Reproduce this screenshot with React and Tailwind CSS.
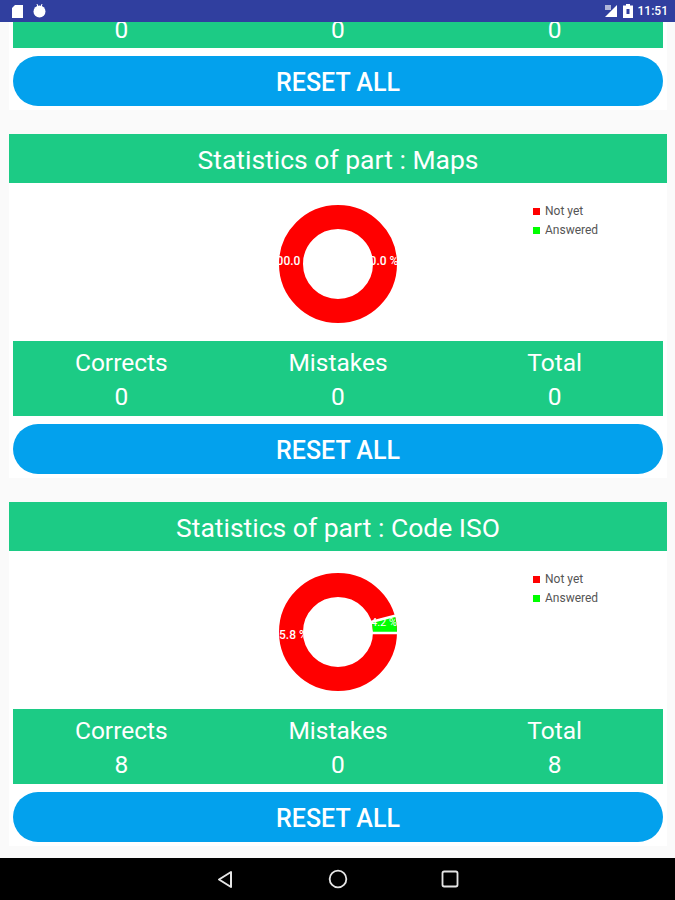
import { Square, Circle } from 'lucide-react';

const cards = [
  { part: 'Maps', corrects: 0, mistakes: 0, total: 0, answered: 0 },
  { part: 'Code ISO', corrects: 8, mistakes: 0, total: 8, answered: 4.2 },
];

function Donut({ answered }) {
  return (
    <svg width="130" height="130" viewBox="-65 -65 130 130" className="block">
      <circle r="47" fill="none" stroke="#ff0000" strokeWidth="24" />
      {answered > 0 ? (
        <>
          <path d="M 35 0 L 59 0 A 59 59 0 0 0 57 -15.5 L 34 -9.5 Z" fill="#00ff00" />
          <path d="M 33 -10 L 60 -17" stroke="#ffffff" strokeWidth="2.5" />
          <path d="M 33 1 L 60 1" stroke="#ffffff" strokeWidth="2.5" />
          <text x="-48" y="6.5" textAnchor="middle" fill="#ffffff" fontSize="12" fontWeight="500">95.8 %</text>
          <text x="46" y="-6" textAnchor="middle" fill="#ffffff" fontSize="11">4.2 %</text>
        </>
      ) : (
        <>
          <text x="-47" y="1" textAnchor="middle" fill="#ffffff" fontSize="12" fontWeight="500">100.0 %</text>
          <text x="46" y="1" textAnchor="middle" fill="#ffffff" fontSize="12" fontWeight="500">0.0 %</text>
        </>
      )}
    </svg>
  );
}

function Legend() {
  return (
    <div className="absolute left-[524px] top-[21px] flex flex-col gap-[5px] text-[12px] leading-[14px] text-[#555555]">
      <div className="flex items-center gap-[5px]">
        <span className="w-[7px] h-[7px] bg-[#ff0000]" />
        Not yet
      </div>
      <div className="flex items-center gap-[5px]">
        <span className="w-[7px] h-[7px] bg-[#00ff00]" />
        Answered
      </div>
    </div>
  );
}

function ResetButton() {
  return (
    <button className="ml-[4px] mt-[8px] w-[650px] h-[50px] rounded-full bg-[#03a1ed] text-white text-[25px] font-medium pt-[3px]">
      RESET ALL
    </button>
  );
}

function StatCard({ card }) {
  return (
    <section className="bg-white ml-[9px] mr-[8px] h-[344px] mb-[24px]">
      <h2 className="h-[49px] bg-[#1ccb85] text-white text-[26.5px] flex items-center justify-center pt-[3px]">
        Statistics of part : {card.part}
      </h2>
      <div className="relative h-[158px] flex items-center justify-center pt-[4px]">
        <Donut answered={card.answered} />
        <Legend />
      </div>
      <div className="mx-[4px] h-[75px] bg-[#1ccb85] text-white text-[24.5px] leading-[34px] grid grid-cols-3 text-center pt-[4.5px]">
        <div>Corrects<br />{card.corrects}</div>
        <div>Mistakes<br />{card.mistakes}</div>
        <div>Total<br />{card.total}</div>
      </div>
      <ResetButton />
    </section>
  );
}

export default function App() {
  return (
    <div className="w-[675px] h-[900px] flex flex-col bg-[#fafafa] overflow-hidden font-['Roboto',sans-serif]">
      <div className="h-[22px] shrink-0 bg-[#303f9f] flex items-center justify-between pl-[11px] pr-[7px]">
        <div className="flex items-center gap-[9px]">
          <svg width="13" height="15" viewBox="0 0 13 15"><path d="M4 1 H12 V14 H1 V4 Z" fill="#ffffff" /></svg>
          <svg width="13" height="14" viewBox="0 0 13 14"><circle cx="6.5" cy="7.5" r="6" fill="#ffffff" /><path d="M4 0 L5 3 M9 0 L8 3" stroke="#ffffff" /></svg>
        </div>
        <div className="flex items-center gap-[5px] text-white text-[12px] font-medium">
          <svg width="14" height="14" viewBox="0 0 14 14"><path d="M13 1 V13 H1 Z" fill="#ffffff" /><path d="M1 1 H7 V6 H1 Z" fill="#b0b6d8" /></svg>
          <svg width="10" height="14" viewBox="0 0 10 14"><path d="M3 0 H7 V1.5 H10 V14 H0 V1.5 H3 Z" fill="#ffffff" /><rect x="3.5" y="5" width="3" height="5" fill="#303f9f" /></svg>
          11:51
        </div>
      </div>
      <div className="flex-1 min-h-0 overflow-hidden">
        {/* top card is scrolled off, only its totals row and button still show */}
        <section className="bg-white ml-[9px] mr-[8px] h-[88px] mb-[24px]">
          <div className="mx-[4px] h-[26px] pb-[10px] bg-[#1ccb85] text-white text-[24.5px] leading-[16px] grid grid-cols-3 text-center">
            <div>0</div>
            <div>0</div>
            <div>0</div>
          </div>
          <ResetButton />
        </section>
        {cards.map((card) => (
          <StatCard key={card.part} card={card} />
        ))}
      </div>
      <div className="h-[42px] shrink-0 bg-black flex items-center justify-center gap-[92px]">
        <svg width="20" height="20" viewBox="0 0 20 20"><path d="M15 3 V18 L3 10.5 Z" fill="none" stroke="#e5e5e5" strokeWidth="2" strokeLinejoin="round" /></svg>
        <Circle size={20} color="#e5e5e5" strokeWidth={2.2} />
        <Square size={20} color="#e5e5e5" strokeWidth={2.2} />
      </div>
    </div>
  );
}
